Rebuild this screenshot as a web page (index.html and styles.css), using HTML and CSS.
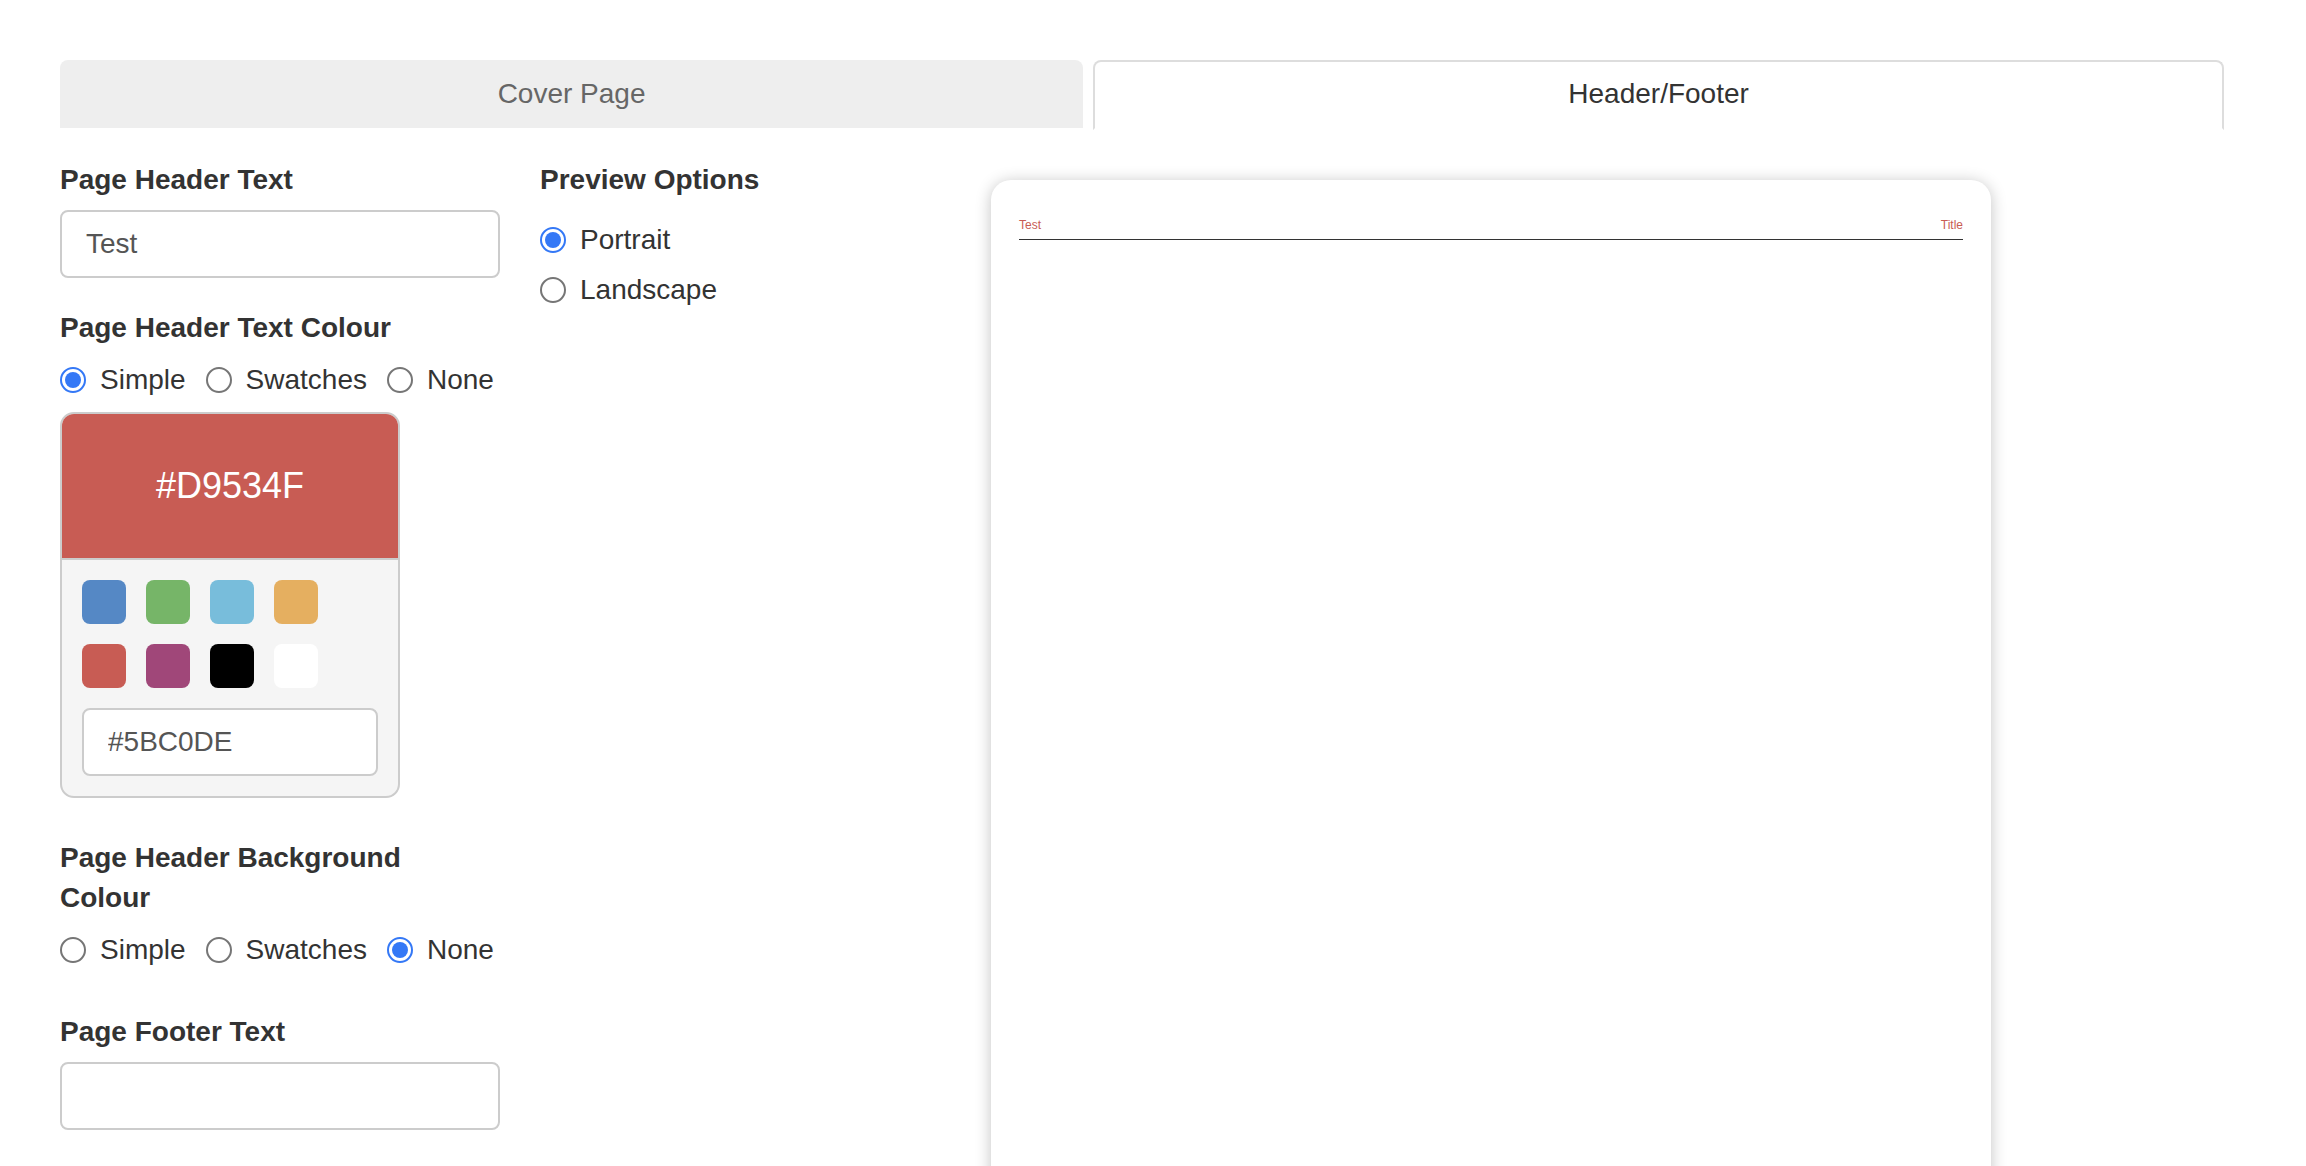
FILE: index.html
```
<!DOCTYPE html>
<html lang="en">
<head>
    <meta charset="UTF-8">
    <meta name="viewport" content="width=device-width, initial-scale=1.0">
    <title>Header/Footer</title>
    <link rel="stylesheet" href="styles.css">
</head>
<body>
    <nav class="tabs">
        <a class="tab" href="#cover">Cover Page</a>
        <a class="tab active" href="#header-footer" aria-current="page">Header/Footer</a>
    </nav>
    <main class="layout">
        <form class="settings">
            <div class="group">
                <label class="title" for="header-text">Page Header Text</label>
                <input class="text-input" type="text" id="header-text" value="Test">
            </div>

            <fieldset class="group">
                <legend class="title">Page Header Text Colour</legend>
                <div class="radio-row">
                    <label class="radio"><input type="radio" name="text-colour" checked>Simple</label>
                    <label class="radio"><input type="radio" name="text-colour">Swatches</label>
                    <label class="radio"><input type="radio" name="text-colour">None</label>
                </div>
                <div class="picker">
                    <div class="picker-value">#D9534F</div>
                    <div class="picker-body">
                        <div class="swatches">
                            <button type="button" class="swatch blue" aria-label="Blue"></button>
                            <button type="button" class="swatch green" aria-label="Green"></button>
                            <button type="button" class="swatch cyan" aria-label="Light blue"></button>
                            <button type="button" class="swatch orange" aria-label="Orange"></button>
                            <button type="button" class="swatch red" aria-label="Red"></button>
                            <button type="button" class="swatch purple" aria-label="Purple"></button>
                            <button type="button" class="swatch black" aria-label="Black"></button>
                            <button type="button" class="swatch white" aria-label="White"></button>
                        </div>
                        <input class="text-input" type="text" value="#5BC0DE" aria-label="Hex colour">
                    </div>
                </div>
            </fieldset>

            <fieldset class="group">
                <legend class="title">Page Header Background Colour</legend>
                <div class="radio-row">
                    <label class="radio"><input type="radio" name="bg-colour">Simple</label>
                    <label class="radio"><input type="radio" name="bg-colour">Swatches</label>
                    <label class="radio"><input type="radio" name="bg-colour" checked>None</label>
                </div>
            </fieldset>

            <div class="group">
                <label class="title" for="footer-text">Page Footer Text</label>
                <input class="text-input" type="text" id="footer-text">
            </div>
        </form>

        <fieldset class="options">
            <legend class="title">Preview Options</legend>
            <div class="radio-list">
                <label class="radio"><input type="radio" name="orientation" checked>Portrait</label>
                <label class="radio"><input type="radio" name="orientation">Landscape</label>
            </div>
        </fieldset>

        <section class="preview">
            <div class="sheet">
                <div class="sheet-header">
                    <span>Test</span>
                    <span>Title</span>
                </div>
            </div>
        </section>
    </main>
</body>
</html>
```

FILE: styles.css
```
* {
    box-sizing: border-box;
}
body {
    margin: 0;
    padding: 60px 82px 0 60px;
    height: 100vh;
    overflow: hidden;
    background-color: #fff;
    color: #333;
    font-family: "Helvetica Neue", Helvetica, "Liberation Sans", Arial, sans-serif;
    font-size: 28px;
    line-height: 40px;
}
fieldset {
    margin: 0;
    padding: 0;
    border: 0;
    min-width: 0;
}

/* tabs */
.tabs {
    display: grid;
    grid-template-columns: 19fr 21fr;
    gap: 10px;
    margin-bottom: 30px;
}
.tab {
    margin-bottom: 2px;
    padding: 14px;
    border-radius: 8px 8px 0 0;
    background-color: #eee;
    color: #666;
    text-align: center;
    text-decoration: none;
}
.tab.active {
    margin-bottom: 0;
    padding: 12px 14px 14px;
    border: 2px solid #ddd;
    border-bottom-color: #fff;
    background-color: #fff;
    color: #333;
}

/* columns */
.layout {
    display: grid;
    grid-template-columns: 480fr 218fr 1466fr;
    align-items: start;
}
.settings {
    padding-right: 40px;
}
.group {
    margin-bottom: 30px;
}
.title {
    display: block;
    padding: 0;
    font-weight: bold;
}
.settings .title {
    padding-right: 20px;
}
.options .title {
    white-space: nowrap;
}
.text-input {
    display: block;
    width: 100%;
    height: 68px;
    padding: 12px 24px;
    border: 2px solid #ccc;
    border-radius: 8px;
    background-color: #fff;
    color: #555;
    font: inherit;
}
.title + .text-input {
    margin-top: 10px;
}

/* radios */
.radio-row {
    display: flex;
    gap: 20px;
    padding: 12px 0;
}
.radio-list {
    display: flex;
    flex-direction: column;
    gap: 10px;
    padding-top: 20px;
}
.radio {
    display: flex;
    align-items: center;
    gap: 14px;
}
.radio input {
    appearance: none;
    flex: none;
    width: 26px;
    height: 26px;
    margin: 0;
    padding: 3px;
    border: 2px solid #767676;
    border-radius: 50%;
    background-color: #fff;
}
.radio input:checked {
    border-color: #3478f6;
    background: #3478f6 content-box;
}

/* colour picker */
.picker {
    width: 340px;
    max-width: 100%;
    margin-bottom: 10px;
    border: 2px solid #ccc;
    border-radius: 14px;
    background-color: #f5f5f5;
    overflow: hidden;
}
.picker-value {
    padding: 50px 0;
    border-bottom: 2px solid #ccc;
    background-color: #c85c54;
    color: #fff;
    font-size: 36px;
    line-height: 44px;
    text-align: center;
}
.picker-body {
    padding: 20px;
}
.swatches {
    display: grid;
    grid-template-columns: repeat(4, 44px);
    gap: 20px;
    margin-bottom: 20px;
}
.swatch {
    height: 44px;
    padding: 0;
    border: 0;
    border-radius: 8px;
    cursor: pointer;
}
.blue { background-color: #5588c5; }
.green { background-color: #76b568; }
.cyan { background-color: #78bddb; }
.orange { background-color: #e5af60; }
.red { background-color: #c85c54; }
.purple { background-color: #a04779; }
.black { background-color: #000; }
.white { background-color: #fff; }

/* page preview */
.preview {
    padding-top: 20px;
}
.sheet {
    max-width: 1000px;
    aspect-ratio: 210 / 297;
    margin: 0 auto;
    padding: 36px 28px;
    border-radius: 20px;
    background-color: #fff;
    box-shadow: 0 2px 16px rgba(0, 0, 0, 0.24);
}
.sheet-header {
    display: flex;
    justify-content: space-between;
    padding-bottom: 5px;
    border-bottom: 1px solid #333;
    color: #c85c54;
    font-size: 12px;
    line-height: 18px;
}
```
